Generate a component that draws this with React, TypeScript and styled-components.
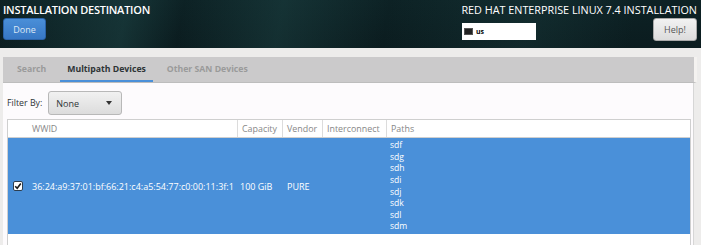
import React from "react";
import styled, { createGlobalStyle } from "styled-components";

const Global = createGlobalStyle`
  html, body { margin: 0; padding: 0; }
  body {
    width: 701px;
    height: 245px;
    overflow: hidden;
    background: #edeceb;
    font-family: "Open Sans", "Noto Sans", sans-serif;
  }
`;

const Page = styled.div`
  width: 701px;
  height: 245px;
  display: flex;
  flex-direction: column;
  overflow: hidden;
`;

const Header = styled.header`
  height: 48px;
  flex: none;
  display: flex;
  justify-content: space-between;
  padding: 0 4px 0 3px;
  background:
    linear-gradient(100deg, rgba(40,80,80,0) 0%, rgba(40,90,90,0.35) 18%, rgba(40,80,80,0) 26%, rgba(40,90,90,0.3) 40%, rgba(40,80,80,0) 55%, rgba(40,90,90,0.2) 75%, rgba(40,80,80,0) 90%),
    linear-gradient(180deg, #0d2225 0%, #0b1c1f 100%);
  color: #fff;
`;

const HeaderLeft = styled.div`
  display: flex;
  flex-direction: column;
  align-items: flex-start;
  padding-top: 3px;
`;

const HeaderRight = styled.div`
  display: flex;
  flex-direction: column;
  align-items: flex-end;
  padding-top: 3px;
  width: 235px;
`;

const Title = styled.div<{ $bold?: boolean }>`
  font-size: ${(p) => (p.$bold ? "11px" : "10.8px")};
  font-weight: ${(p) => (p.$bold ? 600 : 400)};
  line-height: 14px;
  letter-spacing: ${(p) => (p.$bold ? "-0.25px" : "0")};
  white-space: nowrap;
`;

const DoneButton = styled.button`
  margin-top: 1px;
  width: 43px;
  height: 22px;
  border: 1px solid #2a62a8;
  border-radius: 3px;
  background: linear-gradient(180deg, #4a8fd8, #3777c4);
  color: #dfe9f6;
  font-family: inherit;
  font-size: 9px;
  padding: 0;
`;

const RightRow = styled.div`
  display: flex;
  justify-content: space-between;
  align-items: flex-start;
  width: 100%;
  margin-top: 1px;
`;

const KeyboardBox = styled.div`
  margin-top: 5px;
  width: 74px;
  height: 17px;
  background: #fff;
  display: flex;
  align-items: center;
  gap: 3px;
  padding-left: 2px;
  box-sizing: border-box;
  color: #000;
  font-size: 7px;
  font-weight: 700;
`;

const KbIcon = styled.span`
  width: 9px;
  height: 7px;
  background: #222;
  display: inline-block;
  border: 1px solid #555;
  box-sizing: border-box;
`;

const HelpButton = styled.button`
  width: 44px;
  height: 23px;
  border: 1px solid #a9a9a9;
  border-radius: 3px;
  background: linear-gradient(180deg, #f2f2f2, #dcdcdc);
  color: #555;
  font-family: inherit;
  font-size: 9px;
  padding: 0;
`;

const Main = styled.main`
  flex: 1;
  display: flex;
  flex-direction: column;
  padding: 9px 4px 0 3px;
  background: #edeceb;
  min-height: 0;
`;

const TabBar = styled.div`
  height: 26px;
  flex: none;
  background: #cbcacb;
  border-bottom: 1px solid #bdbdbd;
  box-sizing: border-box;
  display: flex;
  padding-left: 7px;
  border-right: 3px solid #f4f2f0;
`;

const Tab = styled.div<{ $active?: boolean }>`
  height: 100%;
  box-sizing: border-box;
  padding: 0 7px;
  margin-right: 7px;
  display: flex;
  align-items: center;
  font-size: 8.7px;
  font-weight: 700;
  color: ${(p) => (p.$active ? "#2e3436" : "#9a9a9a")};
  border-bottom: 2px solid ${(p) => (p.$active ? "#4a90d9" : "transparent")};
`;

const Content = styled.div`
  flex: 1;
  background: #fdfbfd;
  border-right: 1px solid #d6d6d6;
  margin-right: 3px;
  padding: 8px 2px 0 4px;
  display: flex;
  flex-direction: column;
  min-height: 0;
`;

const FilterRow = styled.div`
  display: flex;
  align-items: center;
  gap: 6px;
  height: 24px;
  margin-bottom: 4px;
`;

const FilterLabel = styled.span`
  font-size: 8.8px;
  color: #2e3436;
`;

const Dropdown = styled.div`
  width: 74px;
  height: 24px;
  box-sizing: border-box;
  border: 1px solid #b8b8b8;
  border-radius: 3px;
  background: linear-gradient(180deg, #f1f1f1, #dcdcdc);
  display: flex;
  align-items: center;
  justify-content: space-between;
  padding: 0 9px 0 7px;
  font-size: 9px;
  color: #2e3436;
`;

const Arrow = styled.span`
  width: 0;
  height: 0;
  border-left: 3px solid transparent;
  border-right: 3px solid transparent;
  border-top: 4px solid #333;
`;

const Table = styled.div`
  flex: 1;
  border: 1px solid #cfcfcf;
  border-bottom: none;
  background: #fff;
  display: flex;
  flex-direction: column;
`;

const cols = "19px 210px 45px 40px 64px 1fr";

const HeaderRow = styled.div`
  display: grid;
  grid-template-columns: ${cols};
  height: 17px;
  border-bottom: 1px solid #cfcfcf;
`;

const HeadCell = styled.div<{ $line?: boolean }>`
  font-size: 8.9px;
  color: #878787;
  display: flex;
  align-items: center;
  padding-left: ${(p) => (p.$line ? "4px" : "5px")};
  border-left: ${(p) => (p.$line ? "1px solid #dcdcdc" : "none")};
  white-space: nowrap;
  overflow: hidden;
`;

const DataRow = styled.div`
  display: grid;
  grid-template-columns: ${cols};
  height: 96px;
  background: #4a90d9;
  color: #fff;
  font-size: 9px;
`;

const Cell = styled.div<{ $pad?: number }>`
  display: flex;
  align-items: center;
  padding-left: ${(p) => p.$pad ?? 4}px;
  white-space: nowrap;
`;

const CheckCell = styled.div`
  display: flex;
  align-items: center;
  justify-content: center;
  padding-left: 1px;
`;

const CheckBox = styled.span`
  width: 10px;
  height: 10px;
  box-sizing: border-box;
  background: #fff;
  border: 1px solid #2c3e50;
  border-radius: 2px;
  display: flex;
  align-items: center;
  justify-content: center;
`;

const PathList = styled.div`
  display: flex;
  flex-direction: column;
  justify-content: center;
  padding-left: 4px;
  line-height: 11.6px;
  padding-top: 1px;
  font-size: 8.6px;
`;

const paths = ["sdf", "sdg", "sdh", "sdi", "sdj", "sdk", "sdl", "sdm"];

export default function App() {
  return (
    <Page>
      <Global />
      <Header>
        <HeaderLeft>
          <Title $bold>INSTALLATION DESTINATION</Title>
          <DoneButton>Done</DoneButton>
        </HeaderLeft>
        <HeaderRight>
          <Title>RED HAT ENTERPRISE LINUX 7.4 INSTALLATION</Title>
          <RightRow>
            <KeyboardBox>
              <KbIcon />
              us
            </KeyboardBox>
            <HelpButton>Help!</HelpButton>
          </RightRow>
        </HeaderRight>
      </Header>
      <Main>
        <TabBar>
          <Tab>Search</Tab>
          <Tab $active>Multipath Devices</Tab>
          <Tab>Other SAN Devices</Tab>
        </TabBar>
        <Content>
          <FilterRow>
            <FilterLabel>Filter By:</FilterLabel>
            <Dropdown>
              None
              <Arrow />
            </Dropdown>
          </FilterRow>
          <Table>
            <HeaderRow>
              <HeadCell />
              <HeadCell>WWID</HeadCell>
              <HeadCell $line>Capacity</HeadCell>
              <HeadCell $line>Vendor</HeadCell>
              <HeadCell $line>Interconnect</HeadCell>
              <HeadCell $line>Paths</HeadCell>
            </HeaderRow>
            <DataRow>
              <CheckCell>
                <CheckBox>
                  <svg width="8" height="8" viewBox="0 0 8 8">
                    <path d="M1.2 4.2 L3.2 6.2 L6.8 1.6" fill="none" stroke="#1a1a1a" strokeWidth="1.6" />
                  </svg>
                </CheckBox>
              </CheckCell>
              <Cell $pad={5}>36:24:a9:37:01:bf:66:21:c4:a5:54:77:c0:00:11:3f:1</Cell>
              <Cell $pad={3}>100 GiB</Cell>
              <Cell $pad={5}>PURE</Cell>
              <Cell />
              <PathList>
                {paths.map((p) => (
                  <span key={p}>{p}</span>
                ))}
              </PathList>
            </DataRow>
          </Table>
        </Content>
      </Main>
    </Page>
  );
}
